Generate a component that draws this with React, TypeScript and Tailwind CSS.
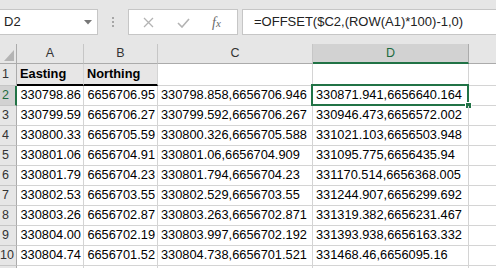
import React from 'react';

const rows: string[][] = [
  ['330798.86', '6656706.95', '330798.858,6656706.946', '330871.941,6656640.164'],
  ['330799.59', '6656706.27', '330799.592,6656706.267', '330946.473,6656572.002'],
  ['330800.33', '6656705.59', '330800.326,6656705.588', '331021.103,6656503.948'],
  ['330801.06', '6656704.91', '330801.06,6656704.909', '331095.775,6656435.94'],
  ['330801.79', '6656704.23', '330801.794,6656704.23', '331170.514,6656368.005'],
  ['330802.53', '6656703.55', '330802.529,6656703.55', '331244.907,6656299.692'],
  ['330803.26', '6656702.87', '330803.263,6656702.871', '331319.382,6656231.467'],
  ['330804.00', '6656702.19', '330803.997,6656702.192', '331393.938,6656163.332'],
  ['330804.74', '6656701.52', '330804.738,6656701.521', '331468.46,6656095.16'],
];

const font = { fontFamily: '"Liberation Sans", Arial, sans-serif' };
const cell = 'border-r border-b border-[#d4d4d4] text-[12.8px] text-black leading-none flex items-end pb-[3px] whitespace-nowrap overflow-visible';

export default function App() {
  return (
    <div className="w-[496px] h-[268px] overflow-hidden bg-white" style={font}>
      {/* Formula bar */}
      <div className="bg-[#e6e6e6] h-[44px] pt-[9px] flex items-start">
        <div className="w-[98px] h-[26px] bg-white border border-l-0 border-[#c6c6c6] flex items-center justify-between pl-[4px] pr-[5px]">
          <span className="text-[13px] text-[#222]">D2</span>
          <svg width="8" height="5" viewBox="0 0 8 5"><path d="M0 0h8L4 4.5z" fill="#777" /></svg>
        </div>
        <div className="w-[30px] h-[26px] flex flex-col items-center justify-center gap-[2px]">
          <span className="w-[2px] h-[2px] bg-[#a6a6a6]" />
          <span className="w-[2px] h-[2px] bg-[#a6a6a6]" />
          <span className="w-[2px] h-[2px] bg-[#a6a6a6]" />
        </div>
        <div className="w-[110px] h-[26px] bg-white border border-[#c6c6c6] flex items-center">
          <svg className="ml-[14px]" width="11" height="11" viewBox="0 0 11 11">
            <path d="M1 1l9 9M10 1l-9 9" stroke="#b3b3b3" strokeWidth="1.3" />
          </svg>
          <svg className="ml-[23px] mt-[2px]" width="13" height="10" viewBox="0 0 13 10">
            <path d="M1 5l4 4L12 1" stroke="#b3b3b3" strokeWidth="1.6" fill="none" />
          </svg>
          <span className="ml-[22px] text-[14px] italic text-[#6a6a6a]" style={{ fontFamily: '"Liberation Serif", serif' }}>
            f<span className="text-[11px]">x</span>
          </span>
        </div>
        <div className="flex-1 ml-[4px] h-[26px] bg-white border border-r-0 border-[#c6c6c6] flex items-center pl-[11px]">
          <span className="text-[13px] text-[#222]">=OFFSET($C2,(ROW(A1)*100)-1,0)</span>
        </div>
      </div>

      {/* Sheet */}
      <div className="grid grid-cols-[17px_67px_74px_155px_156px_1fr]">
        {/* Column headers */}
        <div className="h-[20px] bg-[#e6e6e6] border-r border-b border-[#ababab] flex items-end justify-end pr-[2px] pb-[2px]">
          <svg width="10" height="11" viewBox="0 0 10 11"><path d="M10 0V11H0z" fill="#b4b4b4" /></svg>
        </div>
        {['A', 'B', 'C'].map((c) => (
          <div key={c} className="h-[20px] bg-[#e6e6e6] border-r border-b border-r-[#c6c6c6] border-b-[#ababab] flex items-center justify-center text-[12.5px] text-[#333]">
            {c}
          </div>
        ))}
        <div className="h-[20px] bg-[#d2d2d2] border-r border-r-[#ababab] border-b-2 border-b-[#217346] flex items-center justify-center text-[12.5px] text-[#1e6b40]">
          D
        </div>
        <div className="h-[20px] bg-[#e6e6e6] border-b border-[#ababab]" />

        {/* Row 1 */}
        <div className="h-[22px] bg-[#e6e6e6] border-r border-b border-r-[#ababab] border-b-[#c6c6c6] flex items-center">
          <span className="w-[11px] text-center text-[12.5px] text-[#333]">1</span>
        </div>
        <div className={`${cell} h-[22px] bg-[#e7e6e6] border-b-2 border-b-black font-bold pl-[3px]`}>Easting</div>
        <div className={`${cell} h-[22px] bg-[#e7e6e6] border-b-2 border-b-black font-bold pl-[3px]`}>Northing</div>
        <div className={`${cell} h-[22px]`} />
        <div className={`${cell} h-[22px]`} />
        <div className={`${cell} h-[22px] border-r-0`} />

        {rows.map((r, i) => {
          const n = i + 2;
          const active = n === 2;
          return (
            <React.Fragment key={n}>
              <div
                className={`h-[20px] flex items-center border-b border-b-[#c6c6c6] ${
                  active ? 'bg-[#d2d2d2] border-r-2 border-r-[#217346]' : 'bg-[#e6e6e6] border-r border-r-[#ababab]'
                }`}
              >
                <span className={`w-[11px] text-center text-[12.5px] ${active ? 'text-[#1e6b40]' : 'text-[#333]'}`}>{n}</span>
              </div>
              <div className={`${cell} h-[20px] justify-end pr-[2px]`}>{r[0]}</div>
              <div className={`${cell} h-[20px] justify-end pr-[2px]`}>{r[1]}</div>
              <div className={`${cell} h-[20px] pl-[3px]`}>{r[2]}</div>
              <div className={`${cell} h-[20px] pl-[3px] relative`}>
                {r[3]}
                {active && (
                  <>
                    <div className="absolute -left-[2px] -top-[2px] -right-[1px] -bottom-[1px] border-2 border-[#217346]" />
                    <div className="absolute -right-[4px] -bottom-[4px] w-[7px] h-[7px] bg-[#217346] border border-white" />
                  </>
                )}
              </div>
              <div className={`${cell} h-[20px] border-r-0`} />
            </React.Fragment>
          );
        })}

        {/* partial row 11 */}
        <div className="h-[20px] bg-[#e6e6e6] border-r border-r-[#ababab]" />
        <div className="h-[20px] border-r border-[#d4d4d4]" />
        <div className="h-[20px] border-r border-[#d4d4d4]" />
        <div className="h-[20px] border-r border-[#d4d4d4]" />
        <div className="h-[20px] border-r border-[#d4d4d4]" />
        <div className="h-[20px]" />
      </div>
    </div>
  );
}
